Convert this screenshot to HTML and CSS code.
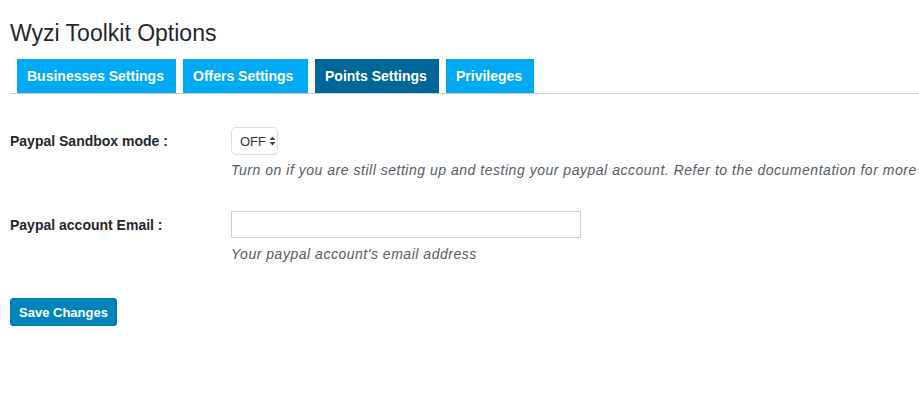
FILE: index.html
```html
<!DOCTYPE html>
<html>
<head>
<meta charset="utf-8">
<link rel="stylesheet" href="styles.css">
</head>
<body>
<div class="wrap">
  <h1 class="title">Wyzi Toolkit Options</h1>
  <nav class="tabs">
    <a class="tab">Businesses Settings</a>
    <a class="tab">Offers Settings</a>
    <a class="tab active">Points Settings</a>
    <a class="tab">Privileges</a>
  </nav>
  <div class="form">
    <div class="row row-select">
      <div class="label">Paypal Sandbox mode :</div>
      <div class="field">
        <div class="select">OFF
          <svg class="arrows" width="7" height="10" viewBox="0 0 7 10"><path d="M3.5 0.5 L6.5 4 H0.5 Z M3.5 9.5 L6.5 6 H0.5 Z" fill="#444"/></svg>
        </div>
        <p class="desc">Turn on if you are still setting up and testing your paypal account. Refer to the documentation for more information.</p>
      </div>
    </div>
    <div class="row row-input">
      <div class="label">Paypal account Email :</div>
      <div class="field">
        <div class="input"></div>
        <p class="desc">Your paypal account's email address</p>
      </div>
    </div>
  </div>
  <button class="save">Save Changes</button>
</div>
</body>
</html>
```

FILE: styles.css
```css
html, body {
  margin: 0;
  padding: 0;
  background: #fff;
  overflow: hidden;
}
body {
  font-family: "Liberation Sans", Arial, sans-serif;
  color: #23282d;
}
.wrap {
  padding: 0 0 0 10px;
}
.title {
  margin: 0;
  padding-top: 19px;
  font-size: 23px;
  font-weight: 400;
  line-height: 28px;
  color: #23282d;
  height: 40px;
}
.tabs {
  display: flex;
  gap: 7px;
  padding-left: 7px;
  border-bottom: 1px solid #ccc;
}
.tab {
  display: block;
  background: #00aaf5;
  color: #fff;
  font-weight: 700;
  font-size: 14px;
  line-height: 34px;
  height: 34px;
  padding: 0 10px;
}
.tab:nth-child(1) { width: 139px; }
.tab:nth-child(2) { width: 105px; }
.tab:nth-child(3) { width: 104px; }
.tab:nth-child(4) { width: 68px; }
.tab.active {
  background: #006799;
}
.form {
  padding-top: 33px;
}
.row {
  display: grid;
  grid-template-columns: 221px 1fr;
}
.row-input {
  margin-top: 31px;
}
.label {
  font-size: 14px;
  font-weight: 700;
  color: #23282d;
  padding-top: 6px;
  line-height: 16px;
}
.field {
  min-width: 0;
  overflow: hidden;
}
.select {
  box-sizing: border-box;
  width: 47px;
  height: 28px;
  border: 1px solid #ddd;
  border-radius: 5px;
  font-size: 13px;
  color: #333;
  display: flex;
  align-items: center;
  padding-left: 8px;
  gap: 3px;
}
.input {
  box-sizing: border-box;
  width: 350px;
  height: 27px;
  border: 1px solid #ccc;
  background: #fff;
}
.desc {
  margin: 5px 0 0;
  font-size: 14px;
  font-style: italic;
  letter-spacing: 0.52px;
  color: #555d66;
  white-space: nowrap;
  line-height: 20px;
}
.row-input .desc {
  margin-top: 6px;
}
.save {
  margin-top: 34px;
  background: #0085ba;
  color: #fff;
  border: 1px solid #0073aa;
  border-radius: 3px;
  font-family: "Liberation Sans", Arial, sans-serif;
  font-weight: 700;
  font-size: 13px;
  width: 107px;
  height: 28px;
  padding: 0;
}
```
